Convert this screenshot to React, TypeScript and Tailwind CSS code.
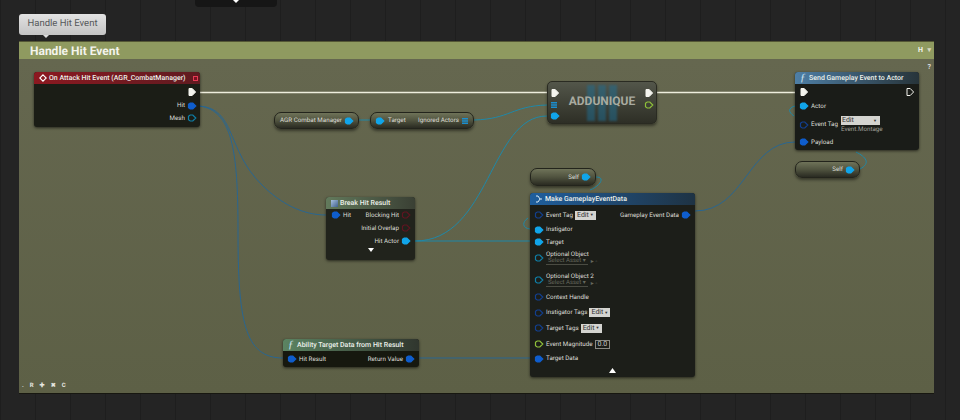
import type { ReactNode } from "react";

type PinKind = "exec" | "execOut" | "object" | "objectOut" | "struct" | "structOut" | "array" | "green" | "red";

function Pin({ kind }: { kind: PinKind }) {
  if (kind === "exec" || kind === "execOut") {
    return (
      <svg width="10" height="10" viewBox="0 0 10 10" className="shrink-0">
        <path
          d="M2 1.5h3.2L8.6 5 5.2 8.5H2z"
          fill={kind === "exec" ? "#f4f4ee" : "none"}
          stroke="#f4f4ee"
          strokeWidth="1"
        />
      </svg>
    );
  }
  if (kind === "array") {
    return (
      <svg width="8" height="8" viewBox="0 0 8 8" className="shrink-0">
        <path d="M1 1h6v1.5H1zM1 3.3h6v1.5H1zM1 5.6h6v1.5H1z" fill="#1b8fd0" />
      </svg>
    );
  }
  const colors: Record<string, string> = {
    object: "#11a5ea",
    objectOut: "#0f7fa8",
    struct: "#0f5dcc",
    structOut: "#123f8f",
    green: "#8fc03a",
    red: "#5e1420",
  };
  const filled = kind === "object" || kind === "struct";
  return (
    <svg width="10" height="8" viewBox="0 0 10 8" className="shrink-0">
      <path
        d="M1.5 2.2 3.2 1h2.6L8.8 4 5.8 7H3.2L1.5 5.8z"
        fill={filled ? colors[kind] : "none"}
        stroke={colors[kind]}
        strokeWidth="1.2"
      />
    </svg>
  );
}

function Label({ children, className = "" }: { children: ReactNode; className?: string }) {
  return <span className={`text-[6.25px] leading-none text-[#dcdcd6] whitespace-nowrap ${className}`}>{children}</span>;
}

function Title({ children }: { children: ReactNode }) {
  return <span className="text-[7px] font-medium leading-none whitespace-nowrap text-[#ecf0ea]">{children}</span>;
}

function EditBox({ label = "Edit" }: { label?: string }) {
  return (
    <span className="flex h-[9px] items-center gap-px bg-[#d4d4d0] px-[2px] text-[7px] leading-none text-[#333]">
      {label}
      <span className="text-[4px]">▼</span>
    </span>
  );
}

function PinRow({ left, right }: { left?: ReactNode; right?: ReactNode }) {
  return (
    <div className="flex items-center justify-between">
      <div className="flex items-center gap-[2px]">{left}</div>
      <div className="flex items-center gap-[2px]">{right}</div>
    </div>
  );
}

function FuncIcon() {
  return <span className="w-[8px] text-[11px] italic leading-none text-[#cfe4f0] font-['Liberation_Serif',serif]">ƒ</span>;
}

function Pill({ className, children }: { className: string; children: ReactNode }) {
  return (
    <div
      className={`absolute flex items-center rounded-[7px] border border-[#23241c] bg-gradient-to-b from-[#6f7359] via-[#50533f] to-[#2a2b22] shadow-[0_2px_3px_rgba(0,0,0,0.45)] ${className}`}
    >
      {children}
    </div>
  );
}

function Wires() {
  return (
    <svg className="absolute left-0 top-0" width="960" height="420" viewBox="0 0 960 420" fill="none">
      <path d="M199 92.5H547M657 92.5H795" stroke="#eeeedd" strokeWidth="1.4" />
      <g stroke="#2a6690" strokeWidth="1">
        <path d="M199 106C236 108 226 150 262 185 C280 203 302 215 326 215" />
        <path d="M199 106C232 110 238 150 238 230C238 320 244 358 283 358" />
        <path d="M695 211C745 211 748 142 795 142" />
        <path d="M419 358H530" />
      </g>
      <g stroke="#1f88a8" strokeWidth="1">
        <path d="M359 120H370" />
        <path d="M474 120C510 119 512 106 547 105" />
        <path d="M415 241C490 241 490 116 547 116" />
        <path d="M415 241H530" />
        <path d="M596 177C606 177 600 186 590 190 M530 229C522 228 522 222 528 218" />
        <path d="M795 106C788 108 788 112 794 116" />
        <path d="M856 152C866 157 871 163 860 169" />
      </g>
    </svg>
  );
}

export default function App() {
  return (
    <div className="relative h-[420px] w-[960px] overflow-hidden bg-[#242424] bg-[linear-gradient(90deg,rgba(0,0,0,0.18)_1px,transparent_1px)] bg-[length:35px_100%] font-['Roboto',sans-serif] [text-rendering:geometricPrecision]">
      {/* Node cut off at the top */}
      <div className="absolute left-[195px] top-0 flex h-[7px] w-[82px] justify-center rounded-b bg-[#161616]">
        <svg width="6" height="3" viewBox="0 0 6 3">
          <path d="M0 0h6L3 3z" fill="#fff" />
        </svg>
      </div>

      {/* Comment bubble */}
      <div className="absolute left-[19px] top-[14px] flex h-[21px] w-[87px] items-center justify-center rounded-[3px] bg-gradient-to-b from-[#e2e2e2] to-[#c4c4c4] text-[9.5px] text-[#55585a]">
        Handle Hit Event
        <span className="absolute left-[24px] top-[21px] h-0 w-0 border-x-[3px] border-t-[3px] border-x-transparent border-t-[#ddd]" />
      </div>

      {/* Comment box */}
      <div className="absolute left-[19px] top-[41px] flex h-[352px] w-[915px] flex-col border-t border-[#545735] bg-[#60634c] shadow-[0_1px_0_#171710]">
        <div className="relative flex h-[17px] items-center bg-[#8f9a60] pl-[11px] text-[12px] font-bold text-[#f4f4ec]">
          Handle Hit Event
          <span className="absolute right-[11px] top-[3px] text-[7px] font-bold">H</span>
          <span className="absolute right-[3px] top-[3px] text-[7px] text-[#d8d8c0]">▾</span>
        </div>
        <div className="relative flex-1 bg-gradient-to-b from-[#65674f] to-[#5d6046]">
          <span className="absolute right-[3px] top-[3px] text-[7px] font-bold text-[#ddd]">?</span>
          <div className="absolute bottom-[4px] left-[3px] flex items-center gap-[6px] text-[6px] font-bold leading-none text-[#e6e6e0]">
            <span>.</span>
            <span>R</span>
            <span>✚</span>
            <span>✖</span>
            <span>C</span>
          </div>
        </div>
      </div>

      <Wires />

      {/* On Attack Hit Event */}
      <div className="absolute left-[34px] top-[72px] h-[55px] w-[166px] overflow-hidden rounded-[3px] bg-[#1b1d16] shadow-[0_1px_3px_rgba(0,0,0,0.6)]">
        <div className="flex h-[12px] items-center justify-between bg-gradient-to-r from-[#8c1820] to-[#5f1a20] pl-[5px] pr-[2px]">
          <div className="flex items-center gap-[2px]">
            <svg width="8" height="8" viewBox="0 0 8 8">
              <path d="M4 .8 7.2 4 4 7.2.8 4z" fill="none" stroke="#fff" strokeWidth="1.1" />
            </svg>
            <Title>On Attack Hit Event (AGR_CombatManager)</Title>
          </div>
          <span className="h-[5px] w-[5px] border border-[#e63a55] bg-[#7a1020]" />
        </div>
        <div className="flex flex-col items-end gap-[4.5px] pr-[3px] pt-[3px]">
          <PinRow right={<Pin kind="exec" />} />
          <PinRow right={<><Label>Hit</Label><Pin kind="struct" /></>} />
          <PinRow right={<><Label>Mesh</Label><Pin kind="objectOut" /></>} />
        </div>
      </div>

      {/* Pure nodes on the top row */}
      <Pill className="left-[274px] top-[112px] h-[17px] w-[85px] justify-end gap-[2px] pr-[4px]">
        <Label>AGR Combat Manager</Label>
        <Pin kind="object" />
      </Pill>
      <Pill className="left-[370px] top-[112px] h-[17px] w-[104px] justify-between px-[4px]">
        <div className="flex items-center gap-[3px]">
          <Pin kind="object" />
          <Label>Target</Label>
        </div>
        <div className="flex items-center gap-[2px]">
          <Label>Ignored Actors</Label>
          <Pin kind="array" />
        </div>
      </Pill>

      {/* ADDUNIQUE */}
      <div className="absolute left-[547px] top-[81px] flex h-[43px] w-[110px] justify-between rounded-[5px] border border-[#2a2b22] bg-gradient-to-b from-[#53564a] to-[#2e2f26] px-[2px] pt-[6px] shadow-[0_2px_3px_rgba(0,0,0,0.45)]">
        <div className="flex flex-col items-start gap-[3px]">
          <Pin kind="exec" />
          <Pin kind="array" />
          <Pin kind="object" />
        </div>
        <div className="relative flex-1">
          <div className="absolute left-[27px] top-[-3px] flex h-[36px] gap-[3px] opacity-50 blur-[1px]">
            <span className="w-[8px] bg-[#1f6f95]" />
            <span className="w-[8px] bg-[#1f6f95]" />
            <span className="w-[8px] bg-[#1f6f95]" />
          </div>
          <span className="absolute left-[0] top-[6px] w-full text-center text-[12px] font-bold leading-[14px] text-[#a9aba0]">ADDUNIQUE</span>
        </div>
        <div className="flex flex-col items-end gap-[3px]">
          <Pin kind="exec" />
          <Pin kind="green" />
        </div>
      </div>

      {/* Send Gameplay Event to Actor */}
      <div className="absolute left-[795px] top-[72px] h-[78px] w-[124px] overflow-hidden rounded-[3px] bg-[#1a1c18] shadow-[0_1px_3px_rgba(0,0,0,0.6)]">
        <div className="flex h-[12px] items-center gap-[1px] bg-gradient-to-r from-[#4e7fa6] to-[#27343a] pl-[5px] text-[#e8eef2]">
          <FuncIcon />
          <Title>Send Gameplay Event to Actor</Title>
        </div>
        <div className="px-[4px] pt-[3px]">
          <PinRow left={<Pin kind="exec" />} right={<Pin kind="execOut" />} />
          <div className="mt-[5px]">
            <PinRow left={<><Pin kind="object" /><Label>Actor</Label></>} />
          </div>
          <div className="mt-[6px] flex items-center gap-[2px]">
            <Pin kind="structOut" />
            <Label>Event Tag</Label>
            <div className="ml-px flex flex-col">
              <span className="flex h-[9px] w-[39px] items-center justify-between bg-[#d4d4d0] px-[1px] text-[7px] leading-none text-[#333]">
                Edit
                <span className="pr-[2px] text-[4px]">▼</span>
              </span>
              <span className="text-[6.25px] leading-[8px] text-[#a0a098]">Event.Montage</span>
            </div>
          </div>
          <div className="mt-[5px]">
            <PinRow left={<><Pin kind="struct" /><Label>Payload</Label></>} />
          </div>
        </div>
      </div>

      <Pill className="left-[795px] top-[161px] h-[17px] w-[65px] justify-end gap-[2px] pr-[4px]">
        <Label>Self</Label>
        <Pin kind="object" />
      </Pill>
      <Pill className="left-[530px] top-[168px] h-[18px] w-[66px] justify-end gap-[2px] pr-[4px]">
        <Label>Self</Label>
        <Pin kind="object" />
      </Pill>

      {/* Break Hit Result */}
      <div className="absolute left-[326px] top-[197px] h-[63px] w-[89px] overflow-hidden rounded-[3px] bg-[#21231c] shadow-[0_1px_3px_rgba(0,0,0,0.6)]">
        <div className="flex h-[12px] items-center gap-[2px] bg-gradient-to-r from-[#627a5c] to-[#3a4034] pl-[5px]">
          <span className="h-[7px] w-[7px] bg-[linear-gradient(135deg,#a8c0e0,#40608c)]" />
          <Title>Break Hit Result</Title>
        </div>
        <div className="flex flex-col gap-[5px] pl-[5px] pr-[4px] pt-[2px]">
          <PinRow left={<><Pin kind="struct" /><Label>Hit</Label></>} right={<><Label>Blocking Hit</Label><Pin kind="red" /></>} />
          <PinRow right={<><Label>Initial Overlap</Label><Pin kind="red" /></>} />
          <PinRow right={<><Label>Hit Actor</Label><Pin kind="object" /></>} />
        </div>
        <div className="mt-[3px] flex justify-center">
          <svg width="6" height="4" viewBox="0 0 6 4">
            <path d="M0 0h6L3 4z" fill="#fff" />
          </svg>
        </div>
      </div>

      {/* Make GameplayEventData */}
      <div className="absolute left-[530px] top-[193px] flex h-[184px] w-[165px] flex-col overflow-hidden rounded-[3px] bg-[#1c1e19] shadow-[0_1px_3px_rgba(0,0,0,0.6)]">
        <div className="flex h-[12px] shrink-0 items-center gap-[2px] bg-gradient-to-r from-[#1f5f9e] to-[#1e3344] pl-[5px]">
          <svg width="8" height="8" viewBox="0 0 8 8">
            <path d="M1 1h2l2 3H7M5 4 3 7H1" fill="none" stroke="#d7eaf5" strokeWidth="1" />
          </svg>
          <Title>Make GameplayEventData</Title>
        </div>
        <div className="flex flex-1 flex-col pl-[4px] pr-[4px]">
          <div className="flex h-[18px] items-center justify-between pt-[2px]">
            <div className="flex items-center gap-[2px]">
              <Pin kind="structOut" />
              <Label>Event Tag</Label>
              <EditBox />
            </div>
            <div className="flex items-center gap-[2px]">
              <Label>Gameplay Event Data</Label>
              <Pin kind="struct" />
            </div>
          </div>
          <div className="flex h-[13px] items-center gap-[2px]"><Pin kind="object" /><Label>Instigator</Label></div>
          <div className="flex h-[12px] items-center gap-[2px]"><Pin kind="object" /><Label>Target</Label></div>
          <div className="flex h-[20px] items-center gap-[2px]">
            <Pin kind="objectOut" />
            <div className="flex flex-col gap-[1px]">
              <Label>Optional Object</Label>
              <div className="flex items-center gap-[3px] text-[6px] leading-none text-[#66685e]">
                <span className="border-b border-[#4a4b42] px-[2px]">Select Asset ▾</span>
                <span>▸ ◦</span>
              </div>
            </div>
          </div>
          <div className="flex h-[21px] items-center gap-[2px] pt-[3px]">
            <Pin kind="objectOut" />
            <div className="flex flex-col gap-[1px]">
              <Label>Optional Object 2</Label>
              <div className="flex items-center gap-[3px] text-[6px] leading-none text-[#66685e]">
                <span className="border-b border-[#4a4b42] px-[2px]">Select Asset ▾</span>
                <span>▸ ◦</span>
              </div>
            </div>
          </div>
          <div className="flex h-[16px] items-center gap-[2px]"><Pin kind="structOut" /><Label>Context Handle</Label></div>
          <div className="flex h-[15px] items-center gap-[2px]"><Pin kind="structOut" /><Label>Instigator Tags</Label><EditBox /></div>
          <div className="flex h-[16px] items-center gap-[2px]"><Pin kind="structOut" /><Label>Target Tags</Label><EditBox /></div>
          <div className="flex h-[16px] items-center gap-[2px]">
            <Pin kind="green" />
            <Label>Event Magnitude</Label>
            <span className="flex h-[9px] items-center border border-[#8a8a84] px-[2px] text-[7px] leading-none text-[#ccc]">0.0</span>
          </div>
          <div className="flex h-[13px] items-center gap-[2px]"><Pin kind="struct" /><Label>Target Data</Label></div>
          <div className="mt-[3px] flex justify-center">
            <svg width="7" height="5" viewBox="0 0 7 5">
              <path d="M3.5 0 7 5H0z" fill="#fff" />
            </svg>
          </div>
        </div>
      </div>

      {/* Ability Target Data from Hit Result */}
      <div className="absolute left-[283px] top-[339px] h-[28px] w-[136px] overflow-hidden rounded-[3px] bg-[#16180f] shadow-[0_1px_3px_rgba(0,0,0,0.6)]">
        <div className="flex h-[12px] items-center gap-[1px] bg-gradient-to-r from-[#5b8462] to-[#30362e] pl-[5px]">
          <FuncIcon />
          <Title>Ability Target Data from Hit Result</Title>
        </div>
        <div className="px-[4px] pt-[4px]">
          <PinRow left={<><Pin kind="struct" /><Label>Hit Result</Label></>} right={<><Label>Return Value</Label><Pin kind="struct" /></>} />
        </div>
      </div>
    </div>
  );
}
